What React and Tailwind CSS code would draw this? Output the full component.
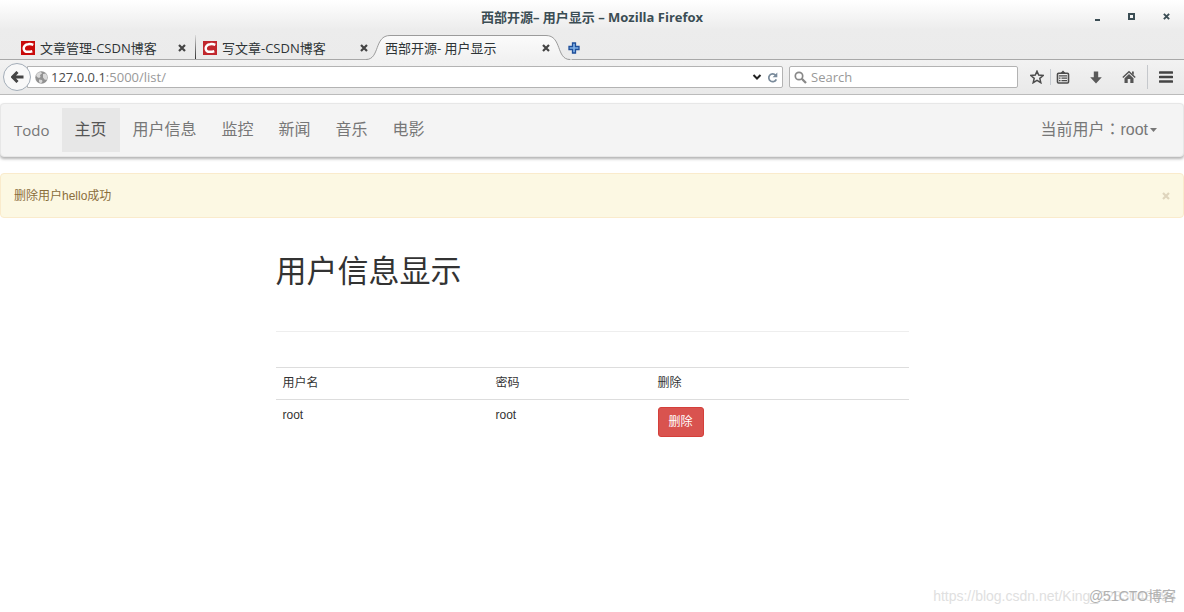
import React from "react";

const cjk = "font-['Liberation_Sans','Noto_Sans_CJK_SC',sans-serif]";
const chrome = "font-['Open_Sans','Noto_Sans_CJK_SC',sans-serif]";

function CrossIcon({ className }) {
  return (
    <svg className={className} viewBox="0 0 8 8" fill="none" stroke="currentColor" strokeWidth="2.2" aria-hidden="true">
      <path d="M1 1l6 6M7 1l-6 6" />
    </svg>
  );
}

function Favicon({ color }) {
  return (
    <svg className="size-[14px] shrink-0" viewBox="0 0 14 14" aria-hidden="true">
      <rect width="14" height="14" fill={color} />
      <path d="M12.300 3.800C10.600 3.100 8.600 2.900 7 3.200 4.300 3.600 2.900 5.200 2.700 7.200c-.2 2.400 1.500 3.600 4.300 3.600 1.400 0 2.900-.2 4.300-.6" fill="none" stroke="#fff" strokeWidth="2.500" />
    </svg>
  );
}

function Tab({ title, color, active, divider }) {
  return (
    <div role="tab" aria-selected={!!active} className="relative flex h-full w-[182px] shrink-0 items-center pt-[2px] pr-[10px] pl-[7px]">
      {active && (
        <svg className="absolute top-0 -left-3 h-[26px] w-[206px]" viewBox="0 0 206 26" aria-hidden="true">
          <defs>
            <linearGradient id="tabFill" x1="0" y1="0" x2="0" y2="1">
              <stop offset="0" stopColor="#fbfbfb" />
              <stop offset="1" stopColor="#f1f1f1" />
            </linearGradient>
          </defs>
          <path d="M0 24.500C14 24.500 8 .5 24 .5H180C196 .5 190 24.500 204 24.500H206V26H0Z" fill="url(#tabFill)" />
          <path d="M0 24.500C14 24.500 8 .5 24 .5H180C196 .5 190 24.500 204 24.500" fill="none" stroke="#9b9b9b" />
        </svg>
      )}
      <div className="relative flex min-w-0 flex-1 items-center gap-[5px]">
        {color && <Favicon color={color} />}
        <span className="flex-1 truncate">{title}</span>
        <button type="button" aria-label="关闭标签页" className="text-[#444]">
          <CrossIcon className="size-2" />
        </button>
      </div>
      {divider && <span className="absolute top-0 right-0 h-6 w-px bg-linear-to-b from-[#ddd] to-[#333]" />}
    </div>
  );
}

function Browser() {
  return (
    <header className={`${chrome} text-[13px] leading-5 text-[#2e3436]`}>
      <div className="bg-linear-to-b from-white via-[#ececec] to-[#ebebeb]">
        <div className="flex h-[35px] items-center pr-[14px] pb-[2px] text-[#3b4d54]">
          <div className="w-[90px]" />
          <h1 className="flex-1 text-center text-[13px] font-bold">西部开源– 用户显示 – Mozilla Firefox</h1>
          <div className="flex w-[76px] items-center justify-between">
            <button type="button" aria-label="最小化">
              <svg className="h-2 w-[6px]" viewBox="0 0 6 8" aria-hidden="true"><path d="M1 6h5v2H1z" fill="currentColor" /></svg>
            </button>
            <button type="button" aria-label="最大化">
              <svg className="size-[7px]" viewBox="0 0 7 7" aria-hidden="true"><path d="M1 1h5v5H1z" fill="none" stroke="currentColor" strokeWidth="2" /></svg>
            </button>
            <button type="button" aria-label="关闭"><CrossIcon className="size-[7px]" /></button>
          </div>
        </div>
        <div role="tablist" className="flex h-[25px] border-b border-[#a8a8a8] pl-[14px]">
          <Tab title="文章管理-CSDN博客" color="#c90b0b" divider />
          <Tab title="写文章-CSDN博客" color="#c1272d" />
          <Tab title="西部开源- 用户显示" active />
          <button type="button" aria-label="新标签页" className="relative ml-2 pt-px">
            <svg className="size-3" viewBox="0 0 12 12" aria-hidden="true">
              <path d="M4.500 1h3v3.500H11v3H7.500V11h-3V7.500H1v-3h3.500z" fill="#7fb0e6" stroke="#1f4f9a" strokeWidth="1.300" />
            </svg>
          </button>
        </div>
      </div>

      <div className="flex h-[35px] items-center border-b border-[#bbb] bg-linear-to-b from-[#f2f2f2] to-[#e9e9e9] pr-[11px] pl-[3px] text-[#4c4c4c]">
        <button type="button" aria-label="后退" className="relative z-10 flex size-7 shrink-0 items-center justify-center rounded-full border border-[#a3adb8] bg-[#f8f8f8]">
          <svg className="h-3 w-[13px]" viewBox="0 0 13 12" aria-hidden="true">
            <path d="M6.500 1L1.500 6l5 5M2 6h10.500" fill="none" stroke="#444" strokeWidth="3" />
          </svg>
        </button>
        <div className="-ml-1 flex h-[22px] flex-1 items-center rounded-r-xs border border-[#b3b3b3] bg-white pr-1 pl-[7px]">
          <svg className="size-[13px] shrink-0" viewBox="0 0 13 13" aria-hidden="true">
            <circle cx="6.500" cy="6.500" r="6.200" fill="#929292" />
            <path d="M1 4l2-2.500 3-.5 1 1.500-2 1.500.5 2L4 7 2 6zM8 3l3-.5L12.500 6l-1 3-2-.5L8 6.500zM4 8.500l3 .5.500 1.500L6 12.500 4 11z" fill="#d9d9d9" />
          </svg>
          <div className="ml-[3px] flex-1"><span>127.0.0.1</span><span className="text-[#999]">:5000/list/</span></div>
          <button type="button" aria-label="历史记录">
            <svg className="h-2 w-[10px]" viewBox="0 0 10 8" aria-hidden="true"><path d="M1.500 2L5 5.500 8.500 2" fill="none" stroke="#222" strokeWidth="2" /></svg>
          </button>
          <button type="button" aria-label="重新载入" className="ml-[5px]">
            <svg className="size-[11px]" viewBox="0 0 11 11" aria-hidden="true">
              <path d="M8.600 3.200A3.900 3.900 0 1 0 9.300 7.300" fill="none" stroke="#7a8b9b" strokeWidth="1.700" />
              <path d="M10.300.5v4.700H5.600z" fill="#7a8b9b" />
            </svg>
          </button>
        </div>
        <div className="ml-[6px] flex h-[22px] w-[229px] items-center rounded-xs border border-[#b3b3b3] bg-white px-1">
          <svg className="size-[13px] shrink-0" viewBox="0 0 13 13" fill="none" stroke="#888" aria-hidden="true">
            <circle cx="5" cy="5" r="3.700" strokeWidth="1.700" />
            <path d="M7.800 7.800L12 12" strokeWidth="2.300" />
          </svg>
          <input type="search" aria-label="搜索" placeholder="Search" className="ml-1 w-full bg-transparent outline-none placeholder:text-[#999]" />
        </div>
        <div className="ml-3 flex items-center">
          <button type="button" aria-label="收藏">
            <svg className="size-[14px]" viewBox="0 0 14 14" aria-hidden="true">
              <path d="M7 1.200l1.700 3.900 4.500.4-3.400 2.800 1 4.400L7 10.400l-3.800 2.300 1-4.400L.8 5.500l4.500-.4z" fill="none" stroke="currentColor" strokeWidth="1.500" />
            </svg>
          </button>
          <span className="mr-[5px] ml-[6px] h-4 w-px bg-[#c5cad0]" />
          <button type="button" aria-label="书签">
            <svg className="size-[14px]" viewBox="0 0 14 14" aria-hidden="true">
              <rect x="1.500" y="3.200" width="11" height="9.800" rx="1" fill="none" stroke="currentColor" strokeWidth="1.600" />
              <path d="M4 3.500L7 .5l3 3zM3 5.200h8v1.200H3zM3 7.600h1.500v1.200H3zM5.500 7.600H11v1.200H5.500zM3 10h1.500v1.200H3zM5.500 10H11v1.200H5.500z" fill="currentColor" />
            </svg>
          </button>
          <button type="button" aria-label="下载" className="ml-5">
            <svg className="h-[13px] w-3" viewBox="0 0 12 13" aria-hidden="true"><path d="M3.800.5h4.400v5.700h3.600L6 12.500.200 6.200h3.600z" fill="#5a5a5a" /></svg>
          </button>
          <button type="button" aria-label="主页" className="ml-5">
            <svg className="size-[14px]" viewBox="0 0 14 14" aria-hidden="true">
              <path d="M.8 7.500L7 1.700l6.200 5.800" fill="none" stroke="#555" strokeWidth="1.500" />
              <path d="M2.500 8.300L7 4l4.500 4.300V13H8.300V9H5.700v4H2.500zM10 1.500h1.800V5L10 3.500z" fill="#555" />
            </svg>
          </button>
          <span className="mr-[11px] ml-[11px] h-6 w-px bg-[#c5c8cc]" />
          <button type="button" aria-label="菜单">
            <svg className="h-3 w-[14px]" viewBox="0 0 14 12" aria-hidden="true"><path d="M1 1.500h12M1 6h12M1 10.500h12" stroke="#444" strokeWidth="2.600" strokeLinecap="round" /></svg>
          </button>
        </div>
      </div>
    </header>
  );
}

const links = ["主页", "用户信息", "监控", "新闻", "音乐", "电影"];

export default function App() {
  return (
    <div className="relative flex min-h-screen flex-col bg-white">
      <Browser />
      <main className={`${cjk} mt-2 text-xs leading-[18px] text-[#333]`}>
        <nav className="flex h-[54px] items-center rounded border border-[#e7e7e7] bg-[#f4f4f4] pr-[26px] pl-[13px] text-base text-[#777] shadow-[0_2px_3px_rgba(0,0,0,0.3)]">
          <a href="#todo" className="mr-[12px] font-['Open_Sans',sans-serif] text-[15px] font-medium">Todo</a>
          <ul className="flex flex-1 gap-px">
            {links.map((l, i) => (
              <li key={l}>
                <a href="#nav" className={i === 0 ? "flex h-11 items-center bg-[#e7e7e7] px-[13px] text-[#555]" : "flex h-11 items-center px-3"}>{l}</a>
              </li>
            ))}
          </ul>
          <a href="#user" className="flex items-center gap-[2px]">
            <span>当前用户<span className="font-['Noto_Sans_CJK_TC',sans-serif] leading-none">：</span>root</span>
            <svg className="h-1 w-[7px]" viewBox="0 0 7 4" aria-hidden="true"><path d="M0 0h7L3.500 4z" fill="currentColor" /></svg>
          </a>
        </nav>

        <div role="alert" className="mt-4 flex h-[45px] items-center justify-between rounded border border-[#faebcc] bg-[#fcf8e3] px-[13px] pt-px text-[#8a6d3b]">
          <span>删除用户hello成功</span>
          <button type="button" aria-label="关闭提示" className="text-[#dfd5bd]"><CrossIcon className="size-2" /></button>
        </div>

        <section className="mx-auto w-full max-w-[633px]">
          <h2 className="mt-[37px] text-[31px] leading-[34px]">用户信息显示</h2>
          <hr className="mt-[42px] border-[#eee]" />
          <table className="mt-[35px] w-full text-left leading-[17px]">
            <tbody>
              <tr className="border-t border-[#ddd]">
                <td className="w-[213px] px-[7px] py-[7px]">用户名</td>
                <td className="w-[162px] px-[7px] py-[7px]">密码</td>
                <td className="px-[7px] py-[7px]">删除</td>
              </tr>
              <tr className="border-t border-[#ddd] align-top">
                <td className="px-[7px] py-[7px]">root</td>
                <td className="px-[7px] py-[7px]">root</td>
                <td className="px-[7px] py-[7px]">
                  <button type="button" className="h-[30px] rounded-[3px] border border-[#d43f3a] bg-[#d9534f] px-[10px] text-white">删除</button>
                </td>
              </tr>
            </tbody>
          </table>
        </section>
      </main>

      <div className={`${cjk} pointer-events-none absolute right-2 bottom-[6px] text-sm leading-5`}>
        <span className="absolute right-0 bottom-0 text-[#e0e0e0]">https://blog.csdn.net/King_2283048694</span>
        <span className="relative text-[#b0b0b0]">@51CTO博客</span>
      </div>
    </div>
  );
}
